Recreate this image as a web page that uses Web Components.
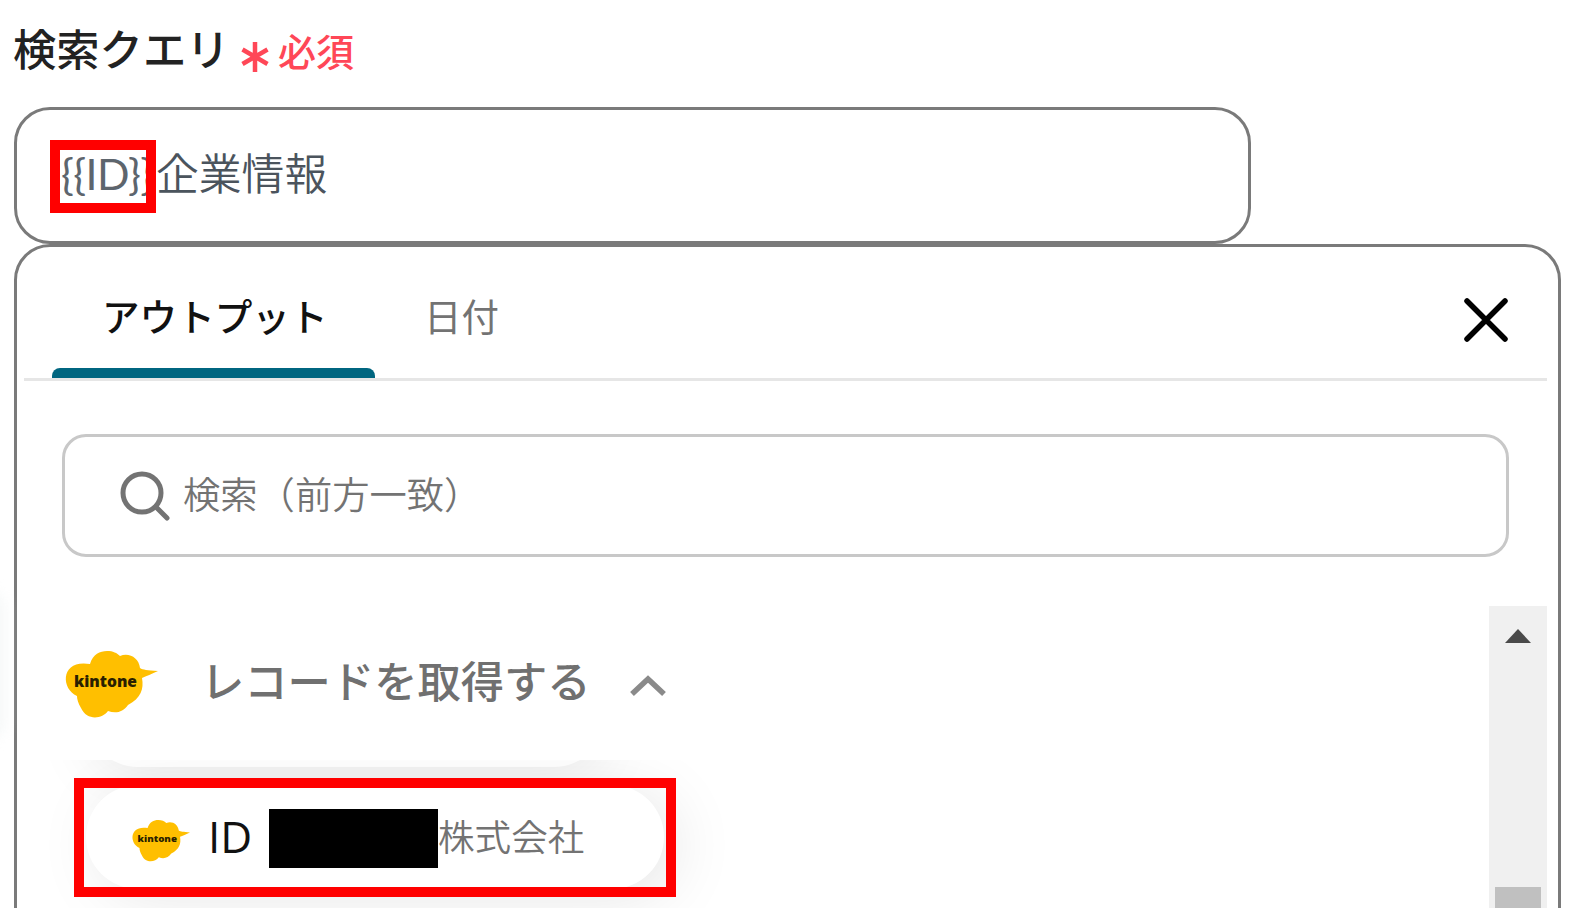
<!DOCTYPE html>
<html lang="ja">
<head>
<meta charset="utf-8">
<title>検索クエリ</title>
<style>
  html, body {
    margin: 0;
    height: 908px;
    overflow: hidden;
    background: #fff;
  }
  body {
    font-family: "Open Sans", "Noto Sans CJK JP", sans-serif;
    color: #222;
  }
</style>
</head>
<body>
<query-form>
  <field-label slot="label" note="必須">検索クエリ</field-label>
  <query-input slot="input" variable="{{ID}}">企業情報</query-input>
  <output-panel slot="panel">
    <tab-bar slot="tabs">
      <tab-item active>アウトプット</tab-item>
      <tab-item>日付</tab-item>
    </tab-bar>
    <search-box slot="search">検索（前方一致）</search-box>
    <record-group>
      <span slot="title">レコードを取得する</span>
      <output-chip label="ID">株式会社</output-chip>
    </record-group>
  </output-panel>
</query-form>

<script>
/** Base class: attaches an open shadow root with the element's markup */
class BaseElement extends HTMLElement {
  constructor() {
    super();
    this.attachShadow({ mode: 'open' });
  }

  connectedCallback() {
    this.shadowRoot.innerHTML = this.render();
  }
}

// Page layout
class QueryForm extends BaseElement {
  render() {
    return `
      <style>
        :host {
          display: flex;
          flex-direction: column;
          box-sizing: border-box;
          width: 1585px;
          height: 908px;
          padding-left: 14px;
          position: relative;
          overflow: hidden;
        }
        .glow {
          position: absolute;
          left: -30px;
          top: 590px;
          width: 36px;
          height: 150px;
          border-radius: 18px;
          background: #f7f9f9;
          filter: blur(6px);
        }
      </style>
      <div class="glow"></div>
      <slot name="label"></slot>
      <slot name="input"></slot>
      <slot name="panel"></slot>
    `;
  }
}

class FieldLabel extends BaseElement {
  render() {
    return `
      <style>
        :host {
          display: flex;
          align-items: center;
          flex: none;
          height: 107px;
          box-sizing: border-box;
          padding-bottom: 8px;
          font-size: 43.3px;
          font-weight: 500;
          line-height: 60px;
          white-space: nowrap;
        }
        .name { width: 228px; margin-left: -1px; }
        svg { width: 28px; height: 32px; margin-top: 15px; }
        .note {
          margin: 3px 0 0 9px;
          font-size: 38px;
          font-weight: 500;
          color: #ff4757;
        }
      </style>
      <span class="name"><slot></slot></span>
      <svg viewBox="0 0 28 32" fill="none" stroke="#ff4757" stroke-width="4.5">
        <path d="M14 1v30M1.500 8.500l25 14.500M26.500 8.500L1.500 23"/>
      </svg>
      <span class="note">${this.getAttribute('note')}</span>
    `;
  }
}

class QueryInput extends BaseElement {
  render() {
    return `
      <style>
        :host {
          display: flex;
          align-items: center;
          flex: none;
          box-sizing: border-box;
          width: 1237px;
          height: 137px;
          border: 3px solid #7a7a7a;
          border-radius: 36px;
          padding: 0 0 4px 44px;
          position: relative;
          font-size: 42.8px;
          font-weight: 350;
          line-height: 60px;
          color: #4b545d;
          white-space: nowrap;
        }
        .variable {
          width: 95px;
          font-family: Lato, sans-serif;
          font-weight: 400;
          color: #5d656d;
          letter-spacing: -0.6px;
        }
        .mark {
          position: absolute;
          left: 33px;
          top: 30px;
          width: 86px;
          height: 53px;
          border: 10px solid #f00;
        }
      </style>
      <span class="variable">${this.getAttribute('variable')}</span>
      <slot></slot>
      <div class="mark"></div>
    `;
  }
}

class OutputPanel extends BaseElement {
  render() {
    return `
      <style>
        :host {
          display: flex;
          flex-direction: column;
          box-sizing: border-box;
          width: 1547px;
          height: 700px;
          flex: none;
          border: 3px solid #7a7a7a;
          border-radius: 36px;
          padding: 0 11px 0 7px;
        }
        .body {
          display: flex;
          justify-content: space-between;
          margin-top: 49px;
          flex: 1;
        }
        .scrollbar {
          display: flex;
          flex-direction: column;
          align-items: center;
          width: 58px;
          background: #f0f0f0;
        }
        .arrow {
          margin-top: 23px;
          border: 13px solid transparent;
          border-top: 0;
          border-bottom: 14px solid #4a4a4a;
        }
        .thumb {
          margin-top: 244px;
          width: 46px;
          flex: 1;
          background: #c0c0c0;
        }
      </style>
      <slot name="tabs"></slot>
      <slot name="search"></slot>
      <div class="body">
        <slot></slot>
        <div class="scrollbar">
          <div class="arrow"></div>
          <div class="thumb"></div>
        </div>
      </div>
    `;
  }
}

class TabBar extends BaseElement {
  render() {
    return `
      <style>
        :host {
          display: flex;
          box-sizing: border-box;
          height: 134px;
          flex: none;
          padding: 0 38px 0 27px;
          border-bottom: 3px solid #e6e6e6;
        }
        svg {
          width: 46px;
          height: 46px;
          margin: 50px 0 0 auto;
        }
      </style>
      <slot></slot>
      <svg viewBox="0 0 46 46" fill="none" stroke="#000" stroke-width="5.5" stroke-linecap="round">
        <path d="M4 4l38 38M42 4L4 42"/>
      </svg>
    `;
  }
}

class TabItem extends BaseElement {
  render() {
    return `
      <style>
        :host {
          display: flex;
          flex-direction: column;
          justify-content: space-between;
          padding-left: 49px;
          font-size: 37.5px;
          line-height: 54px;
          color: #737373;
          white-space: nowrap;
        }
        :host([active]) {
          width: 324px;
          padding: 0;
          font-size: 37.6px;
          font-weight: 500;
          color: #111;
        }
        .text { margin-top: 43px; }
        :host([active]) .text { padding-left: 51px; }
        :host([active]) .line {
          width: 323px;
          height: 10px;
          margin-left: 1px;
          border-radius: 8px 8px 0 0;
          background: #006680;
        }
      </style>
      <div class="text"><slot></slot></div>
      <div class="line"></div>
    `;
  }
}

class SearchBox extends BaseElement {
  render() {
    return `
      <style>
        :host {
          display: flex;
          align-items: center;
          flex: none;
          box-sizing: border-box;
          width: 1447px;
          height: 123px;
          margin: 53px 0 0 38px;
          padding: 0 0 2px 54px;
          border: 3px solid #c8c8c8;
          border-radius: 24px;
          font-size: 37.3px;
          font-weight: 350;
          line-height: 54px;
          color: #737373;
        }
        svg { width: 52px; height: 52px; margin: 2px 12px 0 0; }
      </style>
      <svg viewBox="0 0 52 52" fill="none" stroke="#737373" stroke-width="5" stroke-linecap="round">
        <circle cx="23" cy="23" r="19"/>
        <path d="M37 37l11 11"/>
      </svg>
      <slot></slot>
    `;
  }
}

class KintoneLogo extends BaseElement {
  render() {
    return `
      <style>
        :host { display: block; width: 93px; height: 68px; }
        svg { display: block; width: 100%; height: 100%; overflow: visible; }
        text { font: 800 15px "Open Sans", sans-serif; }
      </style>
      <svg viewBox="0 0 93 68">
        <path fill="#ffbf00" d="M25 14C28 4 35 1 42 1c6 0 10 2 13 5 9-4 19 2 20 12 3 2 7 2 18 3-6 3-12 5-16 7 2 11-1 20-14 27-5 7-12 9-20 6C37 69 22 71 16 58c-3-5-4-9-4-12C-5 38-4 9 25 14z"/>
        <text x="9" y="36.500" textLength="63" lengthAdjust="spacingAndGlyphs" fill="#2a1f00">kintone</text>
      </svg>
    `;
  }
}

class RecordGroup extends BaseElement {
  render() {
    return `
      <style>
        :host { display: block; width: 1450px; }
        .header {
          display: flex;
          align-items: center;
          box-sizing: border-box;
          height: 154px;
          padding-left: 41px;
          font-size: 43.3px;
          font-weight: 500;
          line-height: 60px;
          color: #707070;
          white-space: nowrap;
        }
        kintone-logo { margin-top: 2px; }
        .title { width: 428px; margin: -2px 0 0 43px; }
        .chevron { width: 38px; height: 24px; margin-top: 6px; }
        .list {
          display: flex;
          flex-direction: column;
          height: 150px;
          overflow: hidden;
        }
        /* tail of the chip scrolled out above */
        .previous {
          flex: none;
          width: 520px;
          height: 104px;
          margin: -97px 0 0 62px;
          border-radius: 52px;
          background: #fff;
          box-shadow: 0 10px 60px rgba(0, 0, 0, .08);
        }
      </style>
      <div class="header">
        <kintone-logo></kintone-logo>
        <span class="title"><slot name="title"></slot></span>
        <svg class="chevron" viewBox="0 0 38 24" fill="none" stroke="#8a8a8a" stroke-width="5.5">
          <path d="M3 20L19 5l16 15"/>
        </svg>
      </div>
      <div class="list">
        <div class="previous"></div>
        <slot></slot>
      </div>
    `;
  }
}

class OutputChip extends BaseElement {
  render() {
    return `
      <style>
        :host {
          display: flex;
          align-items: center;
          flex: none;
          box-sizing: border-box;
          width: 578px;
          height: 104px;
          margin: 18px 0 0 62px;
          padding-left: 46px;
          border-radius: 52px;
          background: #fff;
          box-shadow: 12px 8px 64px rgba(0, 0, 0, .1);
          position: relative;
          font-size: 36.6px;
          font-weight: 350;
          line-height: 54px;
          color: #737373;
          white-space: nowrap;
        }
        kintone-logo { width: 58px; height: 43px; margin-top: 6px; }
        .label {
          width: 61px;
          margin: -2px 0 0 18px;
          font-size: 44px;
          font-weight: 400;
          color: #111;
        }
        .masked {
          width: 169px;
          height: 59px;
          margin-top: 3px;
          background: #000;
        }
        .mark {
          position: absolute;
          left: -12px;
          top: -7px;
          width: 582px;
          height: 99px;
          border: 10px solid #f00;
        }
      </style>
      <kintone-logo></kintone-logo>
      <span class="label">${this.getAttribute('label')}</span>
      <span class="masked"></span>
      <slot></slot>
      <div class="mark"></div>
    `;
  }
}

customElements.define('query-form', QueryForm);
customElements.define('field-label', FieldLabel);
customElements.define('query-input', QueryInput);
customElements.define('output-panel', OutputPanel);
customElements.define('tab-bar', TabBar);
customElements.define('tab-item', TabItem);
customElements.define('search-box', SearchBox);
customElements.define('kintone-logo', KintoneLogo);
customElements.define('record-group', RecordGroup);
customElements.define('output-chip', OutputChip);
</script>
</body>
</html>
